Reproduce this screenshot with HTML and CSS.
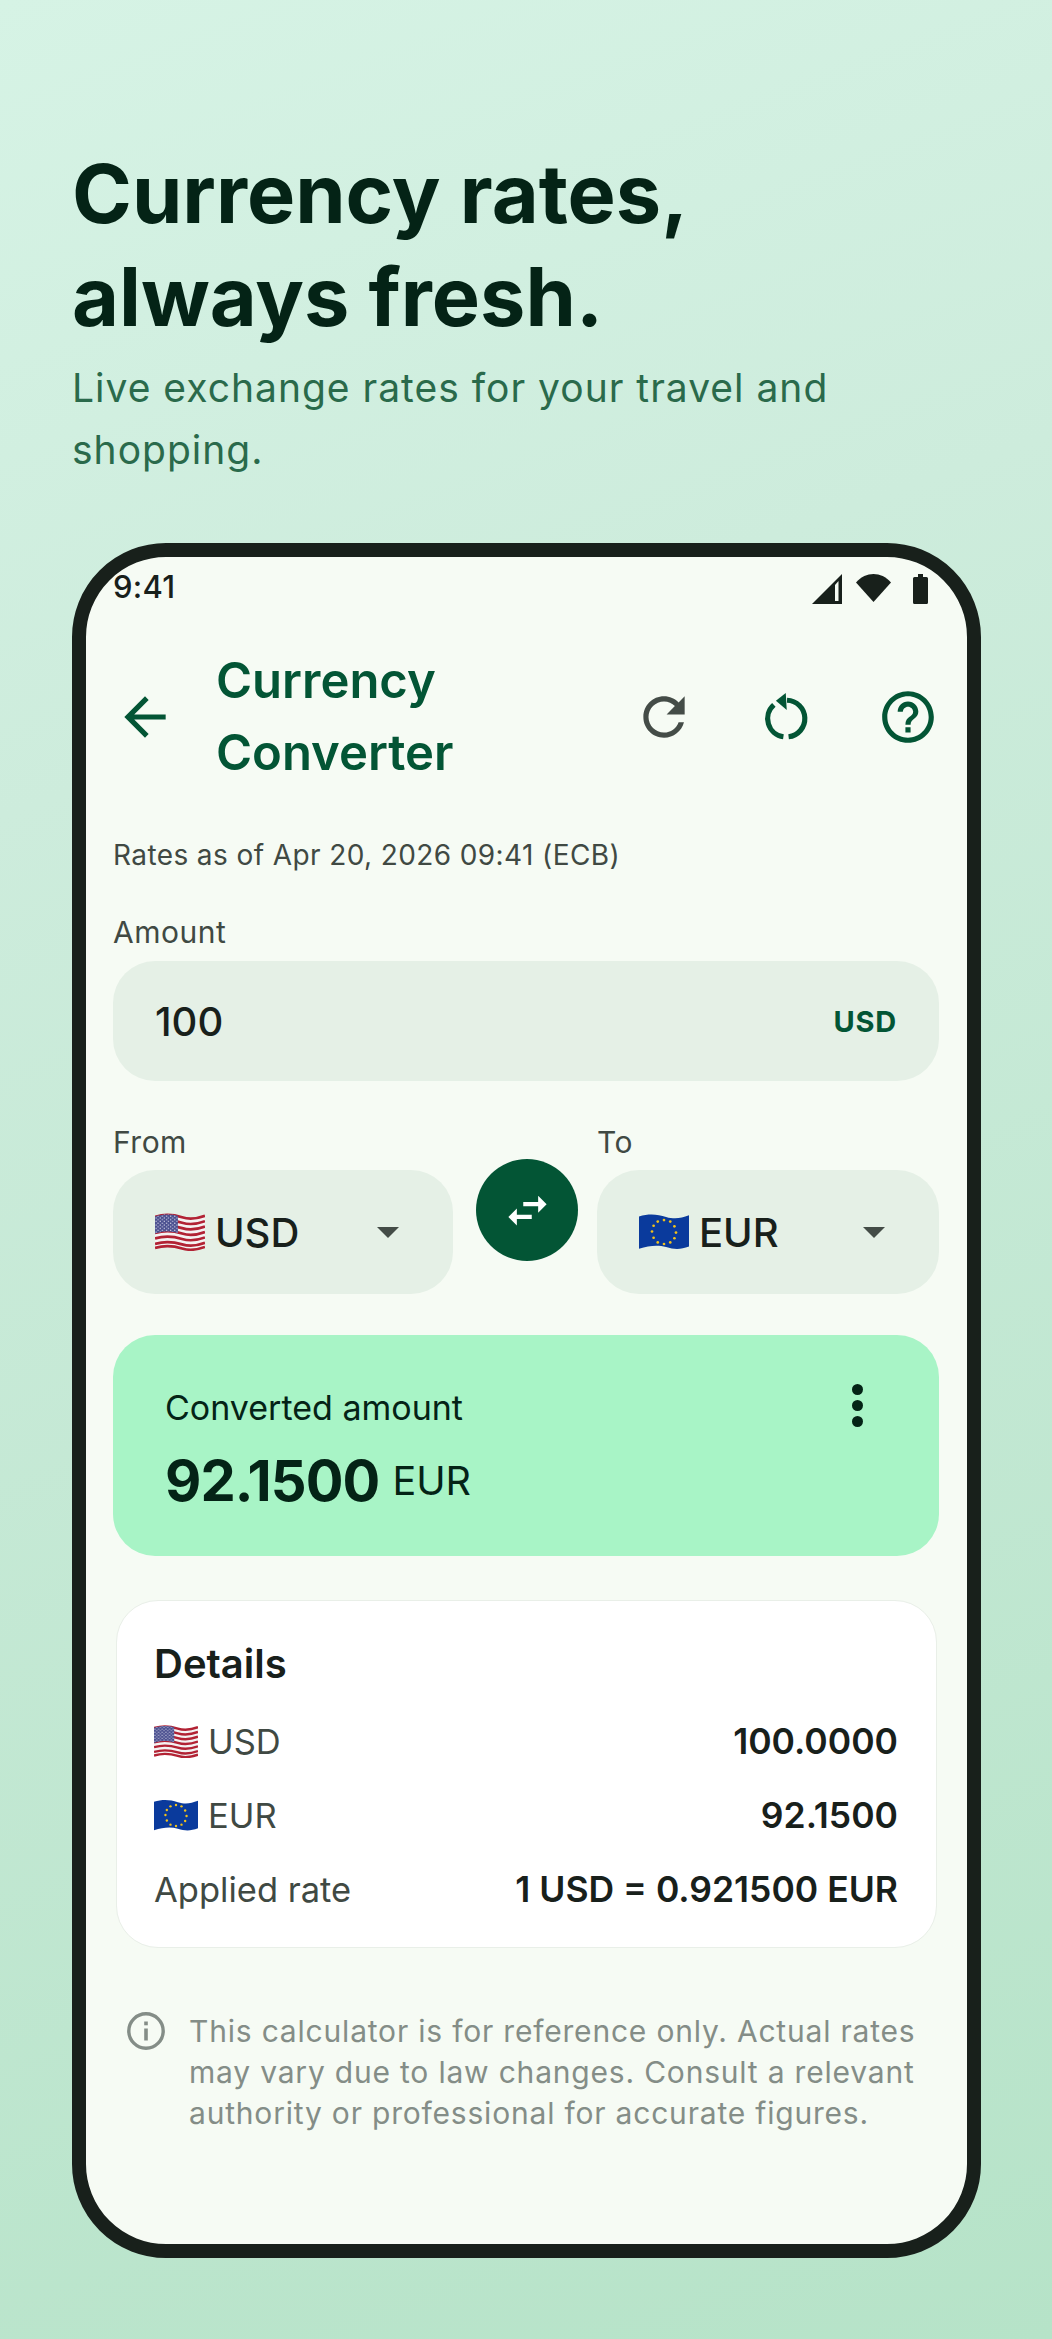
FILE: index.html
```html
<!DOCTYPE html>
<html lang="en">
<head>
<meta charset="utf-8">
<title>Currency Converter</title>
<link rel="stylesheet" href="styles.css">
</head>
<body>
<svg class="defs" width="0" height="0" aria-hidden="true">
  <defs>
    <pattern id="stars" width="4" height="3.4" patternUnits="userSpaceOnUse">
      <circle cx="1" cy="1" r=".62" fill="#e8e8f4"/>
      <circle cx="3" cy="2.7" r=".62" fill="#e8e8f4"/>
    </pattern>
    <path id="stripe" d="M0 0C10 -3 18 -2 26 .5S40 2 48 -1" fill="none" stroke="#b22234" stroke-width="2.6"/>
    <symbol id="flag-us" viewBox="0 0 48 36">
      <path d="M0 3C10 0 18 1 26 3.500S40 5 48 2V32C40 35 34 35 26 32.500S10 31 0 34Z" fill="#f4f2f2"/>
      <use href="#stripe" y="3.400"/><use href="#stripe" y="8.600"/><use href="#stripe" y="13.800"/>
      <use href="#stripe" y="19"/><use href="#stripe" y="24.200"/><use href="#stripe" y="29.400"/><use href="#stripe" y="33.300"/>
      <path d="M0 3C8 .6 15 .6 22 2.400V19C14 17 8 17 0 19.500Z" fill="#4a4f8f"/>
      <path d="M0 3C8 .6 15 .6 22 2.400V19C14 17 8 17 0 19.500Z" fill="url(#stars)"/>
    </symbol>
    <symbol id="flag-eu" viewBox="0 0 48 36">
      <path d="M0 3C10 0 18 1 26 3.500S40 5 48 2V32C40 35 34 35 26 32.500S10 31 0 34Z" fill="#0a3a9c"/>
      <g fill="#f2c21a">
        <circle cx="24" cy="6.500" r="1.300"/><circle cx="30" cy="8" r="1.300"/><circle cx="34" cy="12.500" r="1.300"/>
        <circle cx="35.500" cy="18.500" r="1.300"/><circle cx="34" cy="24" r="1.300"/><circle cx="30" cy="28" r="1.300"/>
        <circle cx="24" cy="29.500" r="1.300"/><circle cx="18" cy="28" r="1.300"/><circle cx="14" cy="23.500" r="1.300"/>
        <circle cx="12.500" cy="17.500" r="1.300"/><circle cx="14" cy="12" r="1.300"/><circle cx="18" cy="8" r="1.300"/>
      </g>
    </symbol>
  </defs>
</svg>

<main class="page">
  <header class="hero">
    <h1 class="hero-title">Currency rates,<br>always fresh.</h1>
    <p class="hero-sub">Live exchange rates for your travel and shopping.</p>
  </header>

  <section class="phone">
    <div class="screen">
      <div class="statusbar">
        <span class="clock">9:41</span>
        <div class="status-icons">
          <svg class="ic-signal" viewBox="0 0 30 30"><path d="M30 0V30H0Z" fill="#18201b"/><path d="M23 11V27H26.500V7Z" fill="#f6fbf4"/></svg>
          <svg class="ic-wifi" viewBox="0 0 35 28"><path d="M0 8.500C10 -2.800 25 -2.800 35 8.500L17.500 28Z" fill="#18201b"/></svg>
          <svg class="ic-battery" viewBox="0 0 15 30"><path d="M5 0H10V3H13.500Q15 3 15 4.500V28.500Q15 30 13.500 30H1.500Q0 30 0 28.500V4.500Q0 3 1.500 3H5Z" fill="#18201b"/></svg>
        </div>
      </div>

      <div class="topbar">
        <svg class="icon icon-back" viewBox="0 0 24 24"><path d="M20 11H7.830l5.590-5.590L12 4l-8 8 8 8 1.410-1.410L7.830 13H20v-2z"/></svg>
        <h2 class="topbar-title">Currency<br>Converter</h2>
        <div class="actions">
          <svg class="icon icon-grey" viewBox="0 0 24 24"><path d="M17.650 6.350C16.200 4.900 14.210 4 12 4c-4.420 0-7.990 3.580-7.990 8s3.570 8 7.990 8c3.730 0 6.840-2.550 7.730-6h-2.080c-.82 2.330-3.040 4-5.650 4-3.310 0-6-2.690-6-6s2.690-6 6-6c1.660 0 3.140.69 4.220 1.780L13 11h7V4l-2.350 2.350z"/></svg>
          <svg class="icon" viewBox="0 0 24 24"><path class="stroke" d="M7.300 7.300A7.100 7.100 0 0 0 11 19.650"/><path class="stroke" d="M12.400 5.500A7.100 7.100 0 0 1 13 19.650"/><path d="M8.100 5.700L11.900 2.700L12.300 9.300Z"/></svg>
          <svg class="icon" viewBox="0 0 24 24"><path d="M11 18h2v-2h-2v2zm1-16C6.480 2 2 6.480 2 12s4.480 10 10 10 10-4.480 10-10S17.520 2 12 2zm0 18c-4.410 0-8-3.590-8-8s3.590-8 8-8 8 3.590 8 8-3.590 8-8 8zm0-14c-2.210 0-4 1.790-4 4h2c0-1.100.9-2 2-2s2 .9 2 2c0 2-3 1.750-3 5h2c0-2.250 3-2.500 3-5 0-2.210-1.790-4-4-4z"/></svg>
        </div>
      </div>

      <div class="content">
        <p class="rates">Rates as of Apr 20, 2026 09:41 (ECB)</p>

        <label class="label">Amount</label>
        <div class="field">
          <span class="field-value">100</span>
          <span class="field-unit">USD</span>
        </div>

        <div class="pair">
          <div class="pair-col">
            <label class="label">From</label>
            <div class="select">
              <svg class="flag"><use href="#flag-us"/></svg>
              <span class="select-code">USD</span>
              <span class="caret"></span>
            </div>
          </div>
          <button class="swap" type="button" aria-label="Swap">
            <svg viewBox="0 0 24 24"><path d="M6.990 11L3 15l3.990 4v-3H14v-2H6.990v-3zM21 9l-3.990-4v3H10v2h7.010v3L21 9z"/></svg>
          </button>
          <div class="pair-col">
            <label class="label">To</label>
            <div class="select">
              <svg class="flag"><use href="#flag-eu"/></svg>
              <span class="select-code">EUR</span>
              <span class="caret"></span>
            </div>
          </div>
        </div>

        <div class="result">
          <div class="result-text">
            <div class="result-label">Converted amount</div>
            <div class="result-line"><span class="result-value">92.1500</span><span class="result-unit">EUR</span></div>
          </div>
          <div class="kebab"><i></i><i></i><i></i></div>
        </div>

        <div class="details">
          <div class="details-title">Details</div>
          <div class="row">
            <span class="row-name"><svg class="flag-small"><use href="#flag-us"/></svg>USD</span>
            <span class="row-value">100.0000</span>
          </div>
          <div class="row">
            <span class="row-name"><svg class="flag-small"><use href="#flag-eu"/></svg>EUR</span>
            <span class="row-value">92.1500</span>
          </div>
          <div class="row">
            <span class="row-name">Applied rate</span>
            <span class="row-value">1 USD = 0.921500 EUR</span>
          </div>
        </div>

        <div class="note">
          <svg class="note-icon" viewBox="0 0 38 38"><circle cx="19" cy="19" r="17.200" fill="none" stroke="#848d87" stroke-width="3.400"/><rect x="17.200" y="16.500" width="3.600" height="12" fill="#848d87"/><rect x="17.200" y="9.500" width="3.600" height="3.800" fill="#848d87"/></svg>
          <p class="note-text">This calculator is for reference only. Actual rates may vary due to law changes. Consult a relevant authority or professional for accurate figures.</p>
        </div>
      </div>
    </div>
  </section>
</main>
</body>
</html>
```

FILE: styles.css
```css
* { box-sizing: border-box; }
html, body { margin: 0; padding: 0; }
body {
  width: 1052px;
  height: 2339px;
  overflow: hidden;
  font-family: Inter, "Noto Sans", sans-serif;
  background: linear-gradient(160deg, #d6f3e5 0%, #cdecdc 30%, #b6e3c8 100%);
}
.defs { position: absolute; }
.page { padding: 143px 72px 0; }

.hero-title {
  margin: 0;
  font-size: 81px;
  line-height: 103px;
  font-weight: 700;
  color: #042316;
}
.hero-sub {
  margin: 8px 0 0;
  width: 820px;
  font-size: 39px;
  line-height: 62px;
  letter-spacing: 1px;
  color: #2a6a4b;
}

.phone {
  width: 909px;
  height: 1715px;
  margin-top: 62px;
  border: 14px solid #18201b;
  border-radius: 94px;
  background: #f6fbf4;
  overflow: hidden;
}
.screen { height: 100%; }

.statusbar {
  height: 78px;
  padding: 0 39px 0 27px;
  display: flex;
  justify-content: space-between;
  align-items: flex-start;
  color: #18201b;
}
.clock { font-size: 31px; line-height: 40px; margin-top: 10px; font-weight: 500; letter-spacing: .3px; }
.status-icons { display: flex; margin-top: 17px; gap: 14px; }
.status-icons svg { display: block; height: 30px; }
.ic-signal { width: 30px; }
.ic-wifi { width: 35px; height: 28px !important; }
.ic-battery { width: 15px; margin-left: 8px; }

.topbar {
  height: 164px;
  display: flex;
  align-items: center;
  color: #035535;
}
.icon { width: 62px; height: 62px; fill: #035535; display: block; flex: none; }
.icon-grey { fill: #444c47; }
.icon .stroke { fill: none; stroke: #035535; stroke-width: 2; }
.icon-back { margin-left: 28px; }
.topbar-title {
  margin: 0 0 0 40px;
  font-size: 49px;
  line-height: 72px;
  font-weight: 600;
  color: #035535;
}
.actions { margin-left: auto; margin-right: 28px; display: flex; gap: 60px; }

.content { padding: 0 28px 0 27px; }
.rates {
  margin: 36px 0 37px;
  font-size: 28px;
  line-height: 40px;
  letter-spacing: .4px;
  color: #404943;
}
.label {
  display: block;
  font-size: 30px;
  line-height: 40px;
  letter-spacing: .5px;
  color: #404943;
}
.field {
  height: 120px;
  margin-top: 9px;
  padding: 0 42px;
  border-radius: 42px;
  background: #e5f0e6;
  display: flex;
  align-items: center;
  justify-content: space-between;
}
.field-value { font-size: 40px; font-weight: 500; color: #18201b; }
.field-unit { font-size: 29px; font-weight: 700; letter-spacing: .8px; color: #035535; }

.pair {
  margin-top: 41px;
  display: grid;
  grid-template-columns: 340px 102px 342px;
  column-gap: 21px;
}
.pair-col .select { margin-top: 8px; }
.swap {
  width: 102px;
  height: 102px;
  margin: 37px 0 0 2px;
  padding: 0;
  border: 0;
  border-radius: 50%;
  background: #035535;
  display: flex;
  align-items: center;
  justify-content: center;
}
.swap svg { width: 51px; height: 51px; fill: #fff; display: block; }
.select {
  height: 124px;
  padding: 0 42px;
  border-radius: 42px;
  background: #e5f0e6;
  display: flex;
  align-items: center;
}
.flag { width: 50px; height: 38px; flex: none; }
.select-code { margin-left: 10px; font-size: 40px; font-weight: 500; color: #18201b; }
.caret {
  margin-left: auto;
  margin-right: 12px;
  width: 0;
  height: 0;
  border-left: 11px solid transparent;
  border-right: 11px solid transparent;
  border-top: 11px solid #444c47;
}

.result {
  height: 221px;
  margin-top: 41px;
  padding: 50px 42px 0 52px;
  border-radius: 42px;
  background: #a8f4c6;
  color: #042316;
  display: flex;
  justify-content: space-between;
  align-items: flex-start;
}
.result-label { font-size: 34px; line-height: 46px; }
.result-line { margin-top: 16px; display: flex; align-items: center; gap: 13px; }
.result-value { font-size: 56px; line-height: 68px; font-weight: 700; letter-spacing: -.9px; }
.result-unit { font-size: 39.500px; }
.kebab { margin-top: -1px; margin-right: 34px; display: flex; flex-direction: column; gap: 5px; }
.kebab i { display: block; width: 11px; height: 11px; border-radius: 50%; background: #042316; }

.details {
  height: 348px;
  margin: 44px 2px 0 3px;
  padding: 36px 38px 0 37px;
  border: 1px solid #e9efe8;
  border-radius: 42px;
  background: #fff;
}
.details-title { font-size: 40px; line-height: 54px; font-weight: 600; color: #18201b; }
.row {
  height: 74px;
  display: flex;
  align-items: center;
  justify-content: space-between;
}
.details-title + .row { margin-top: 13px; }
.row-name { display: flex; align-items: center; font-size: 34.500px; color: #404943; }
.flag-small { width: 44px; height: 33px; margin-right: 10px; flex: none; }
.row-value { font-size: 35.500px; font-weight: 600; color: #18201b; }

.note {
  margin: 63px 0 0 14px;
  display: flex;
  align-items: flex-start;
  gap: 24px;
}
.note-icon { width: 38px; height: 38px; margin-top: 1px; flex: none; }
.note-text {
  margin: 0;
  font-size: 30px;
  line-height: 41px;
  letter-spacing: .8px;
  color: #848d87;
}
```
